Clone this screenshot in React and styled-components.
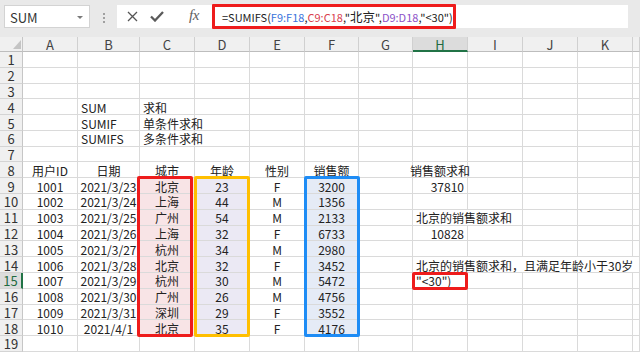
import React from 'react';
import styled, { createGlobalStyle } from 'styled-components';

const FONT = `"Noto Sans CJK SC", "Liberation Sans", sans-serif`;

const GlobalStyle = createGlobalStyle`
  html, body { margin: 0; padding: 0; background: #fff; }
  body { font-family: ${FONT}; }
`;

const COLS = [
  { id: 'A', w: 55 }, { id: 'B', w: 62 }, { id: 'C', w: 55 }, { id: 'D', w: 55 },
  { id: 'E', w: 55 }, { id: 'F', w: 54 }, { id: 'G', w: 54 }, { id: 'H', w: 55 },
  { id: 'I', w: 55 }, { id: 'J', w: 55 }, { id: 'K', w: 55 }, { id: 'L', w: 7 },
];
const ROWS = 19;
const ACTIVE_ROW = 15;
const ACTIVE_COL = 'H';

const PINK = '#f8e4e6';
const LAV = '#ebe9f4';
const BLUE = '#e5ebf6';

const records = [
  ['1001', '2021/3/23', '北京', '23', 'F', '3200'],
  ['1002', '2021/3/24', '上海', '44', 'M', '1356'],
  ['1003', '2021/3/25', '广州', '54', 'M', '2133'],
  ['1004', '2021/3/26', '上海', '32', 'F', '6733'],
  ['1005', '2021/3/27', '杭州', '34', 'M', '2980'],
  ['1006', '2021/3/28', '北京', '32', 'F', '3452'],
  ['1007', '2021/3/29', '杭州', '30', 'M', '5472'],
  ['1008', '2021/3/30', '广州', '26', 'M', '4756'],
  ['1009', '2021/3/31', '深圳', '29', 'F', '3552'],
  ['1010', '2021/4/1', '北京', '35', 'F', '4176'],
];

const cells = {
  B4: { text: 'SUM', align: 'left' },
  C4: { text: '求和', align: 'left' },
  B5: { text: 'SUMIF', align: 'left' },
  C5: { text: '单条件求和', align: 'left' },
  B6: { text: 'SUMIFS', align: 'left' },
  C6: { text: '多条件求和', align: 'left' },
  A8: { text: '用户ID' }, B8: { text: '日期' }, C8: { text: '城市' },
  D8: { text: '年龄' }, E8: { text: '性别' }, F8: { text: '销售额' },
  H8: { text: '销售额求和' },
  H9: { text: '37810', align: 'right' },
  H11: { text: '北京的销售额求和', align: 'left', span: 2 },
  H12: { text: '10828', align: 'right' },
  H14: { text: '北京的销售额求和，且满足年龄小于30岁', align: 'left', span: 5 },
  H15: { text: '"<30")', align: 'left' },
};
records.forEach((rec, i) => {
  const r = 9 + i;
  ['A', 'B', 'C', 'D', 'E', 'F'].forEach((c, j) => {
    const fill = c === 'C' ? PINK : c === 'D' ? LAV : c === 'F' ? BLUE : undefined;
    cells[c + r] = { text: rec[j], fill };
  });
});

const frames = [
  { col: 4, rows: '10 / 20', color: '#ee1c1c', margin: '-2px 2px -1px -3px' },
  { col: 5, rows: '10 / 20', color: '#ffbf00', margin: '-2px 0 -1px -1px' },
  { col: 7, rows: '10 / 20', color: '#1e8cf5', margin: '-2px -1px -1px -1px' },
  { col: 9, rows: '16 / 17', color: '#ee1c1c', margin: '-1px 0 -1px -1px' },
];

/* ---------- top bar ---------- */

const Window = styled.div`
  width: 640px;
  height: 352px;
  overflow: hidden;
  display: flex;
  flex-direction: column;
  background: #fff;
`;

const TopBar = styled.div`
  flex: none;
  height: 37px;
  box-sizing: border-box;
  background: #e9e9e9;
  display: flex;
  align-items: flex-start;
  padding: 5px 0 0 4px;
`;

const NameBox = styled.div`
  width: 86px;
  height: 23px;
  box-sizing: border-box;
  background: #fff;
  border: 1px solid #d3d3d3;
  display: flex;
  align-items: center;
  justify-content: space-between;
  padding: 1px 5px 0 5px;
  font: 13px/1 ${FONT};
  color: #333;
`;

const Caret = styled.span`
  width: 0;
  height: 0;
  border-left: 3px solid transparent;
  border-right: 3px solid transparent;
  border-top: 3px solid #7a7a7a;
  margin-right: 1px;
`;

const Grip = styled.div`
  margin: 8px 0 0 13px;
  display: flex;
  flex-direction: column;
  gap: 2px;
`;

const GripDot = styled.span`
  width: 2px;
  height: 2px;
  background: #a0a0a0;
`;

const IconBox = styled.div`
  margin-left: 12px;
  width: 95px;
  height: 23px;
  background: #fff;
  display: flex;
  align-items: center;
  color: #555;
`;

const IconSlot = styled.span`
  display: flex;
  align-items: center;
  margin-left: ${p => p.$ml}px;
`;

const Fx = styled.span`
  font: italic 15px/1 "Liberation Serif", serif;
  color: #606060;
  letter-spacing: -0.5px;
  margin-top: -2px;
`;

const FormulaField = styled.div`
  flex: 1;
  margin-right: 12px;
  height: 23px;
  background: #fff;
  display: flex;
  align-items: flex-start;
`;

const RedFrame = styled.div`
  width: 244px;
  height: 25px;
  margin-top: -1px;
  box-sizing: border-box;
  border: 3px solid #ee1c1c;
  border-radius: 1px;
  display: flex;
  align-items: center;
  padding: 1px 0 0 7px;
`;

const FormulaText = styled.span`
  font: 11px/1 ${FONT};
  color: #222;
  white-space: nowrap;
`;

const Ref = styled.span`
  color: ${p => p.$color};
`;

const Han = styled.span`
  font-size: 12.5px;
`;

/* ---------- sheet ---------- */

const Sheet = styled.div`
  flex: none;
  height: 315px;
  display: grid;
  grid-template-columns: 23px ${COLS.map(c => c.w + 'px').join(' ')};
  grid-template-rows: 15px repeat(${ROWS}, 15.79px);
  background: #fff;
  overflow: hidden;
`;

const Corner = styled.div`
  grid-column: 1;
  grid-row: 1;
  box-sizing: border-box;
  background: #f0f0f0;
  border-right: 1px solid #c6c6c6;
  border-bottom: 1px solid #bdbdbd;
  display: flex;
  align-items: flex-end;
  justify-content: flex-end;
  padding: 0 1px 2px 0;
  &::after {
    content: '';
    width: 0;
    height: 0;
    border-left: 8px solid transparent;
    border-bottom: 9px solid #c4c4c4;
  }
`;

const ColHead = styled.div`
  grid-column: ${p => p.$col};
  grid-row: 1;
  box-sizing: border-box;
  min-height: 0;
  min-width: 0;
  background: ${p => (p.$active ? '#dcdcdc' : '#f0f0f0')};
  border-right: 1px solid #d0d0d0;
  border-bottom: ${p => (p.$active ? '2px solid #217346' : '1px solid #bdbdbd')};
  display: flex;
  align-items: center;
  justify-content: center;
  font: 13px/1 ${FONT};
  color: ${p => (p.$active ? '#1f6b41' : '#444')};
  padding-top: 1px;
`;

const RowHead = styled.div`
  grid-column: 1;
  grid-row: ${p => p.$row};
  box-sizing: border-box;
  min-height: 0;
  background: ${p => (p.$active ? '#dcdcdc' : '#f0f0f0')};
  border-bottom: 1px solid #d4d4d4;
  border-right: ${p => (p.$active ? '2px solid #217346' : '1px solid #c6c6c6')};
  display: flex;
  align-items: center;
  justify-content: center;
  font: 13px/1 ${FONT};
  color: ${p => (p.$active ? '#1f6b41' : '#333')};
  padding-top: 1px;
`;

const Cell = styled.div`
  grid-column: ${p => p.$col} / span ${p => p.$span || 1};
  grid-row: ${p => p.$row};
  box-sizing: border-box;
  min-width: 0;
  min-height: 0;
  border-right: 1px solid #dadada;
  border-bottom: 1px solid #dadada;
  background: ${p => p.$fill || 'transparent'};
  display: flex;
  align-items: center;
  justify-content: ${p =>
    p.$align === 'left' ? 'flex-start' : p.$align === 'right' ? 'flex-end' : 'center'};
  padding: 2px 3px 0 3px;
  font: 12px/1 ${FONT};
  color: #222;
  white-space: nowrap;
  overflow: visible;
`;

const RangeFrame = styled.div`
  grid-column: ${p => p.$col};
  grid-row: ${p => p.$rows};
  position: relative;
  z-index: 2;
  pointer-events: none;
  box-sizing: border-box;
  border: 3px solid ${p => p.$color};
  border-radius: 2px;
  margin: ${p => p.$margin};
`;

function XIcon() {
  return (
    <svg width="11" height="11" viewBox="0 0 11 11">
      <path d="M1 1 L10 10 M10 1 L1 10" stroke="#555" strokeWidth="1.3" fill="none" />
    </svg>
  );
}

function CheckIcon() {
  return (
    <svg width="14" height="11" viewBox="0 0 14 11">
      <path d="M1 5.5 L5 9.5 L13 1" stroke="#5a5a5a" strokeWidth="2.3" fill="none" />
    </svg>
  );
}

export default function App() {
  const sheetItems = [];
  sheetItems.push(<Corner key="corner" />);
  COLS.forEach((c, i) => {
    sheetItems.push(
      <ColHead key={'h' + c.id} $col={i + 2} $active={c.id === ACTIVE_COL}>
        {c.w > 10 ? c.id : ''}
      </ColHead>
    );
  });
  for (let r = 1; r <= ROWS; r++) {
    sheetItems.push(
      <RowHead key={'r' + r} $row={r + 1} $active={r === ACTIVE_ROW}>
        {r}
      </RowHead>
    );
    let skip = 0;
    COLS.forEach((c, i) => {
      if (skip > 0) {
        skip--;
        return;
      }
      const cell = cells[c.id + r];
      const span = cell && cell.span ? cell.span : 1;
      skip = span - 1;
      sheetItems.push(
        <Cell
          key={c.id + r}
          $col={i + 2}
          $row={r + 1}
          $span={span}
          $align={cell && cell.align}
          $fill={cell && cell.fill}
        >
          {cell ? cell.text : ''}
        </Cell>
      );
    });
  }
  frames.forEach((f, i) => {
    sheetItems.push(
      <RangeFrame key={'f' + i} $col={f.col} $rows={f.rows} $color={f.color} $margin={f.margin} />
    );
  });

  return (
    <>
      <GlobalStyle />
      <Window>
        <TopBar>
          <NameBox>
            <span>SUM</span>
            <Caret />
          </NameBox>
          <Grip>
            <GripDot />
            <GripDot />
            <GripDot />
          </Grip>
          <IconBox>
            <IconSlot $ml={10}>
              <XIcon />
            </IconSlot>
            <IconSlot $ml={12}>
              <CheckIcon />
            </IconSlot>
            <IconSlot $ml={25}>
              <Fx>fx</Fx>
            </IconSlot>
          </IconBox>
          <FormulaField>
            <RedFrame>
              <FormulaText>
                =SUMIFS(<Ref $color="#3a73dc">F9:F18</Ref>,<Ref $color="#d9404d">C9:C18</Ref>,"
                <Han>北京</Han>",<Ref $color="#8c52c8">D9:D18</Ref>,"&lt;30")
              </FormulaText>
            </RedFrame>
          </FormulaField>
        </TopBar>
        <Sheet>{sheetItems}</Sheet>
      </Window>
    </>
  );
}
